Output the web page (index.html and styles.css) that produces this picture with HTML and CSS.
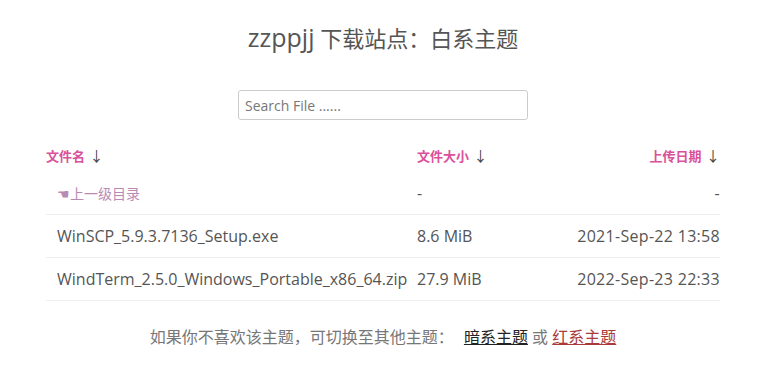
FILE: index.html
```html
<!DOCTYPE html>
<html lang="zh-CN">
<head>
    <meta charset="UTF-8">
    <meta name="viewport" content="width=device-width, initial-scale=1.0">
    <title>zzppjj 下载站点</title>
    <link rel="stylesheet" href="styles.css">
</head>
<body>
    <div class="container">
        <h1><span class="site">zzppjj</span> 下载站点：白系主题</h1>

        <div class="search">
            <input type="text" id="search" placeholder="Search File ......">
        </div>

        <!-- File list -->
        <table class="files">
            <thead>
                <tr>
                    <th class="col-name">文件名 <span class="arrow">↓</span></th>
                    <th class="col-size">文件大小 <span class="arrow">↓</span></th>
                    <th class="col-date">上传日期 <span class="arrow">↓</span></th>
                </tr>
            </thead>
            <tbody>
                <tr>
                    <td class="col-name"><a class="parent" href="#">☚上一级目录</a></td>
                    <td class="col-size">-</td>
                    <td class="col-date">-</td>
                </tr>
                <tr>
                    <td class="col-name"><a href="#">WinSCP_5.9.3.7136_Setup.exe</a></td>
                    <td class="col-size">8.6 MiB</td>
                    <td class="col-date">2021-Sep-22 13:58</td>
                </tr>
                <tr>
                    <td class="col-name"><a href="#">WindTerm_2.5.0_Windows_Portable_x86_64.zip</a></td>
                    <td class="col-size">27.9 MiB</td>
                    <td class="col-date">2022-Sep-23 22:33</td>
                </tr>
            </tbody>
        </table>

        <p class="themes">
            如果你不喜欢该主题，可切换至其他主题：
            <a class="dark" href="#">暗系主题</a> 或 <a class="red" href="#">红系主题</a>
        </p>
    </div>
</body>
</html>
```

FILE: styles.css
```css
body {
    margin: 0;
    padding-right: 5px;
    font-family: "Open Sans", "Noto Sans CJK SC", sans-serif;
    background-color: #fff;
    color: #555;
}

.container {
    width: 674px;
    margin: 0 auto;
}

h1 {
    margin: 0;
    padding-top: 21px;
    text-align: center;
    font-size: 22px;
    font-weight: normal;
    line-height: 32px;
    color: #555;
}

h1 .site {
    font-size: 25px;
}

.search {
    margin-top: 36px;
    text-align: center;
}

.search input {
    width: 290px;
    height: 30px;
    box-sizing: border-box;
    padding: 0 6px;
    border: 1px solid #ccc;
    border-radius: 3px;
    font-family: inherit;
    font-size: 14px;
    color: #555;
}

.search input::placeholder {
    color: #777;
}

.files {
    width: 100%;
    margin-top: 20px;
    border-collapse: collapse;
}

.files th {
    height: 30px;
    padding: 0 0 2px;
    font-size: 13px;
    font-weight: bold;
    color: #d9519a;
    text-align: left;
}

.files th .arrow {
    margin-left: 1px;
    color: #444;
    font-weight: normal;
    font-size: 14px;
}

.files td {
    height: 42px;
    padding: 0;
    font-size: 16px;
    border-bottom: 1px solid #eee;
    white-space: nowrap;
}

.files .col-name {
    width: 371px;
}

.files td.col-name a {
    padding-left: 11px;
    color: #555;
    text-decoration: none;
}

.files td.col-name a.parent {
    color: #b98ab3;
    font-size: 14px;
}

.files td.col-date {
    letter-spacing: 0.3px;
}

.files .col-date,
.files th.col-date {
    text-align: right;
}

.themes {
    margin: 23px 0 0;
    text-align: center;
    font-size: 16px;
    color: #777;
}

.themes a {
    text-decoration: underline;
}

.themes .dark {
    margin-left: 6px;
    color: #222;
}

.themes .red {
    color: #a83a3a;
}
```
